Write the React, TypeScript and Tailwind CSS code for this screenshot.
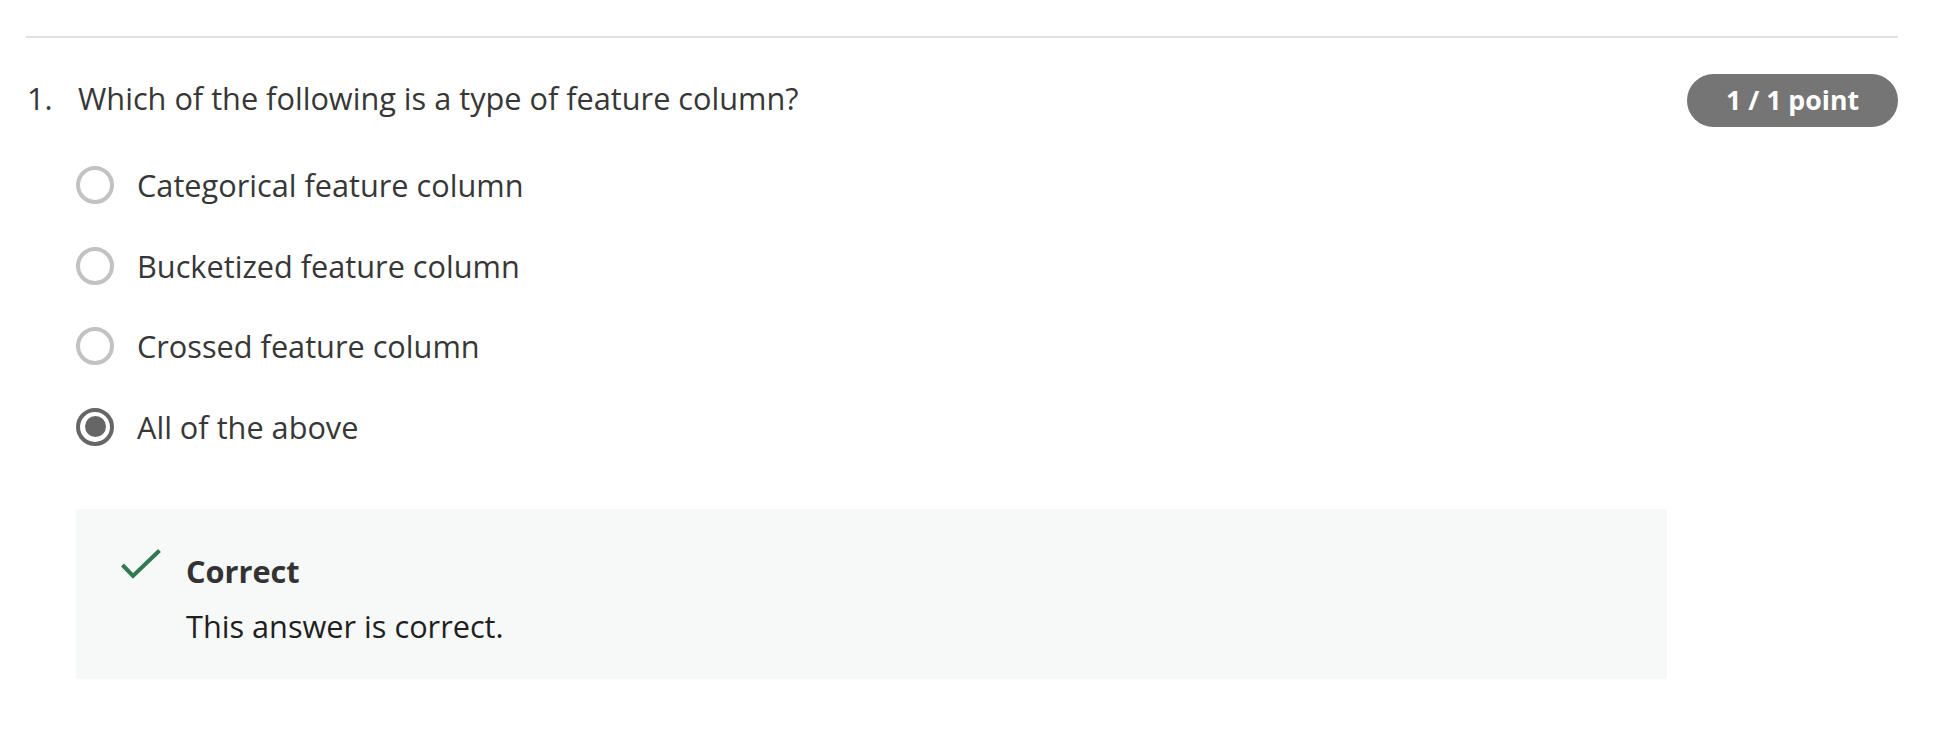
import React from 'react';

const OPTIONS = [
  'Categorical feature column',
  'Bucketized feature column',
  'Crossed feature column',
  'All of the above',
];

const SELECTED = 3;

const Radio = ({ checked }: { checked: boolean }) =>
  checked ? (
    <div className="w-[38px] h-[38px] shrink-0 rounded-full border-[4px] border-[#666666] flex items-center justify-center">
      <div className="w-[21px] h-[21px] rounded-full bg-[#666666]" />
    </div>
  ) : (
    <div className="w-[38px] h-[38px] shrink-0 rounded-full border-[4px] border-[#c2c2c2]" />
  );

export default function App() {
  return (
    <div className="min-h-screen bg-white pl-[26px] pr-[42px] pt-[36px] font-['Open_Sans',sans-serif] text-[#373737]">
      <div className="h-[2px] bg-[#e1e1e1]" />

      {/* question header */}
      <div className="mt-[36px] flex items-start justify-between">
        <div className="mt-[4px] flex text-[30.7px] leading-[40px]">
          <span className="w-[52px] pl-[1px]">1.</span>
          <span>Which of the following is a type of feature column?</span>
        </div>
        <div className="h-[53px] w-[211px] rounded-full bg-[#757575] text-white font-bold text-[26.7px] flex items-center justify-center">
          1 / 1 point
        </div>
      </div>

      {/* options */}
      <div className="ml-[50px] mt-[38px] flex flex-col gap-[40.5px]">
        {OPTIONS.map((opt, i) => (
          <div key={opt} className="flex items-center gap-[23px] h-[40px]">
            <Radio checked={i === SELECTED} />
            <span className="text-[30.7px] leading-[40px]">{opt}</span>
          </div>
        ))}
      </div>

      {/* feedback */}
      <div className="ml-[50px] mt-[62px] w-[1591px] bg-[#f7f8f8] pl-[44px] pt-[42px] pb-[33px] flex">
        <svg width="42" height="32" viewBox="0 0 42 32" className="shrink-0 -mt-[3px] mr-[24px]">
          <polyline points="2.5,17 13,28 39.5,2.5" fill="none" stroke="#2f7a52" strokeWidth="4" />
        </svg>
        <div className="flex flex-col gap-[15px]">
          <span className="text-[30.7px] leading-[40px] font-bold text-[#333333]">Correct</span>
          <span className="text-[30.7px] leading-[40px] text-[#1f1f1f]">This answer is correct.</span>
        </div>
      </div>
    </div>
  );
}
